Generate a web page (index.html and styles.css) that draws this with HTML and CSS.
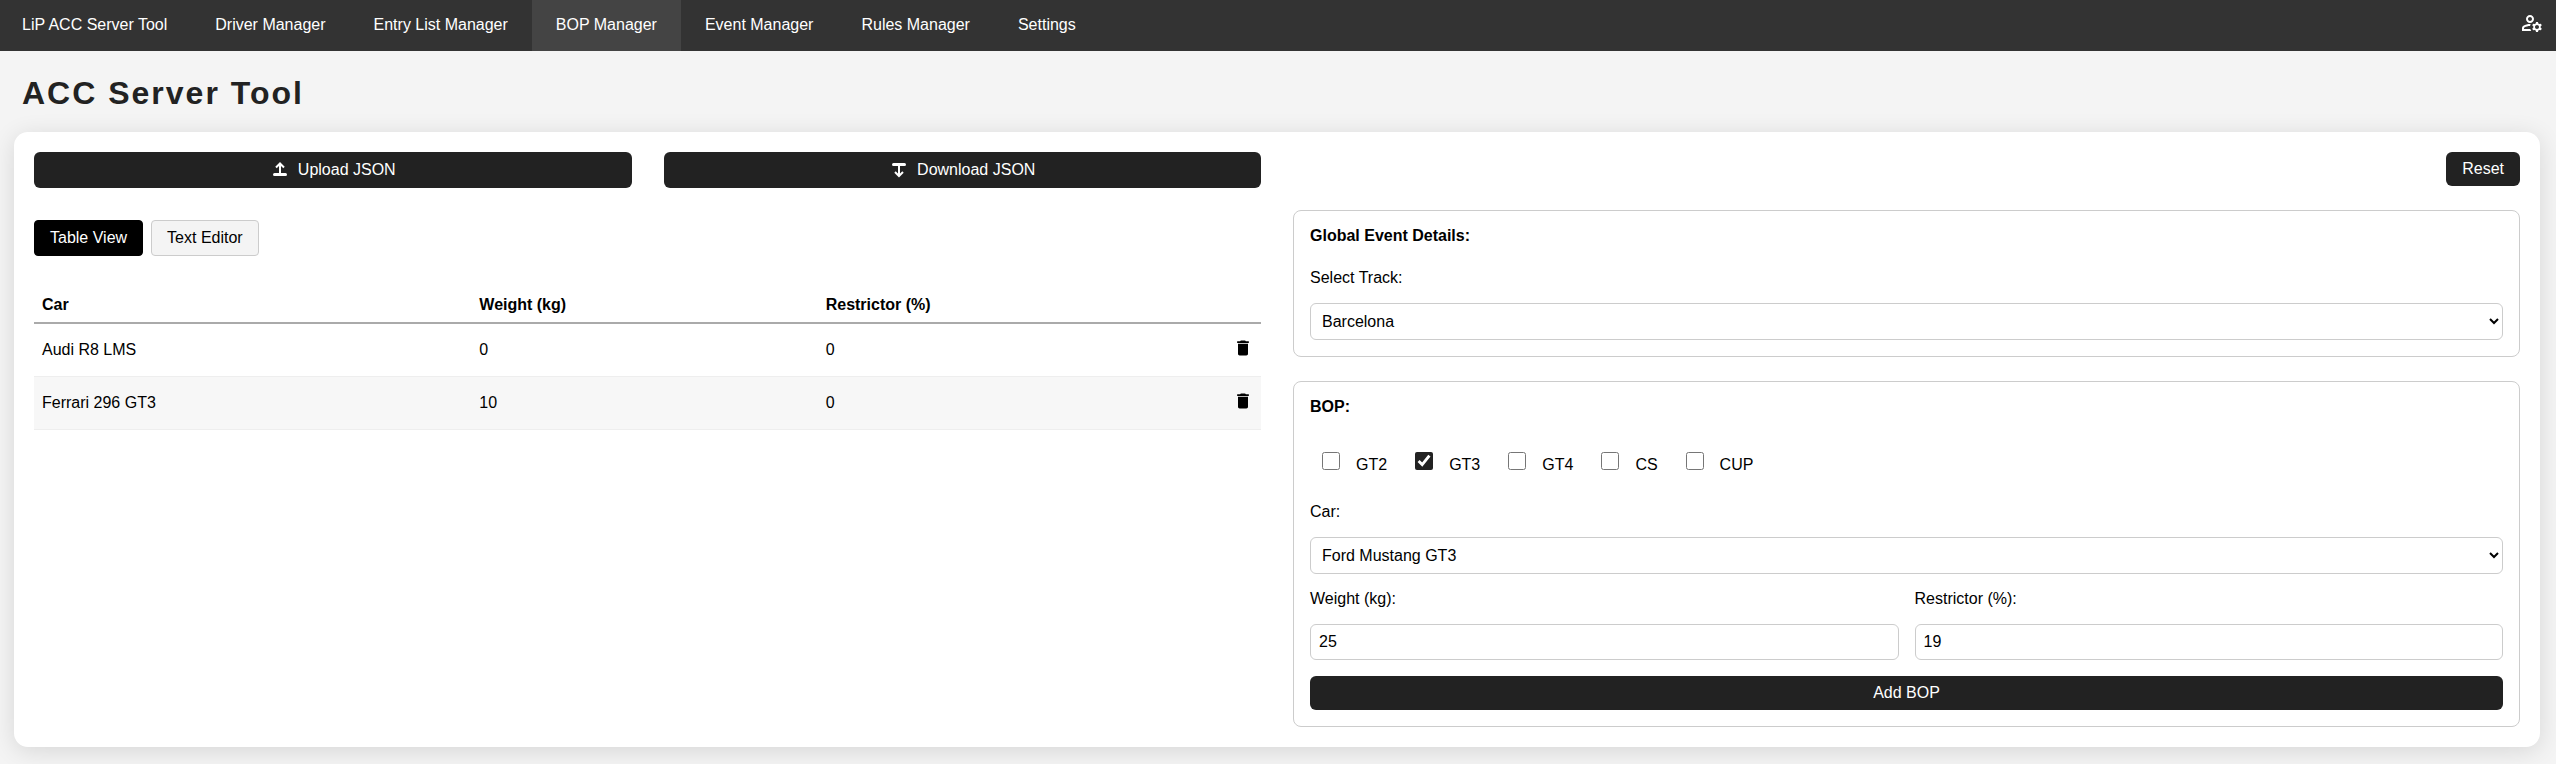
FILE: index.html
```html
<!DOCTYPE html>
<html lang="en">
<head>
    <meta charset="UTF-8">
    <meta name="viewport" content="width=device-width, initial-scale=1.0">
    <title>LiP ACC Server Tool</title>
    <link rel="stylesheet" href="styles.css">
</head>
<body>
    <nav class="navbar">
        <a class="brand" href="#">LiP ACC Server Tool</a>
        <a href="#drivers">Driver Manager</a>
        <a href="#entrylist">Entry List Manager</a>
        <a class="active" href="#bop">BOP Manager</a>
        <a href="#event">Event Manager</a>
        <a href="#rules">Rules Manager</a>
        <a href="#settings">Settings</a>
        <a class="account" href="#account" aria-label="Account">
            <svg width="24" height="24" viewBox="0 0 24 24" fill="currentColor"><path d="M4 18v-.65c0-.34.16-.66.41-.81C6.1 15.53 8.03 15 10 15c.03 0 .05 0 .08.01.1-.7.3-1.37.59-1.98-.22-.02-.44-.03-.67-.03-2.42 0-4.68.67-6.61 1.82-.88.52-1.39 1.5-1.39 2.53V20h9.26c-.42-.6-.75-1.28-.97-2H4zM10 12c2.21 0 4-1.79 4-4s-1.79-4-4-4-4 1.79-4 4 1.79 4 4 4zm0-6c1.1 0 2 .9 2 2s-.9 2-2 2-2-.9-2-2 .9-2 2-2zM20.75 16c0-.22-.03-.42-.06-.63l1.14-1.01-1-1.73-1.45.49c-.32-.27-.68-.48-1.08-.63L18 11h-2l-.3 1.49c-.4.15-.76.36-1.08.63l-1.45-.49-1 1.73 1.14 1.01c-.03.21-.06.41-.06.63s.03.42.06.63l-1.14 1.01 1 1.73 1.45-.49c.32.27.68.48 1.08.63L16 21h2l.3-1.49c.4-.15.76-.36 1.08-.63l1.45.49 1-1.73-1.14-1.01c.03-.21.06-.41.06-.63zM17 18c-1.1 0-2-.9-2-2s.9-2 2-2 2 .9 2 2-.9 2-2 2z"/></svg>
        </a>
    </nav>

    <h1>ACC Server Tool</h1>

    <main class="container">
        <!-- Left: file actions and BOP table -->
        <section class="left">
            <div class="file-actions">
                <button class="btn" type="button">
                    <svg width="18" height="16" viewBox="-3 0 18 16" fill="none" stroke="currentColor"><path d="M7 11V2M3 5.500L7 1.500 11 5.500" stroke-width="2"/><path d="M1.500 12.500h11" stroke-width="3" stroke-linecap="round"/></svg>
                    Upload JSON
                </button>
                <button class="btn" type="button">
                    <svg width="18" height="16" viewBox="-3 0 18 16" fill="none" stroke="currentColor"><path d="M7 4v10M3 10L7 14 11 10" stroke-width="2"/><path d="M1.500 2.500h11" stroke-width="3" stroke-linecap="round"/></svg>
                    Download JSON
                </button>
            </div>

            <div class="tabs">
                <button class="tab selected" type="button">Table View</button>
                <button class="tab" type="button">Text Editor</button>
            </div>

            <table>
                <thead>
                    <tr>
                        <th>Car</th>
                        <th>Weight (kg)</th>
                        <th>Restrictor (%)</th>
                        <th class="remove"></th>
                    </tr>
                </thead>
                <tbody>
                    <tr>
                        <td>Audi R8 LMS</td>
                        <td>0</td>
                        <td>0</td>
                        <td class="remove"><button type="button" aria-label="Delete Audi R8 LMS"><svg width="20" height="20" viewBox="0 0 24 24" fill="currentColor"><path d="M6 19c0 1.100.9 2 2 2h8c1.100 0 2-.9 2-2V7H6v12zM19 4h-3.500l-1-1h-5l-1 1H5v2h14V4z"/></svg></button></td>
                    </tr>
                    <tr>
                        <td>Ferrari 296 GT3</td>
                        <td>10</td>
                        <td>0</td>
                        <td class="remove"><button type="button" aria-label="Delete Ferrari 296 GT3"><svg width="20" height="20" viewBox="0 0 24 24" fill="currentColor"><path d="M6 19c0 1.100.9 2 2 2h8c1.100 0 2-.9 2-2V7H6v12zM19 4h-3.500l-1-1h-5l-1 1H5v2h14V4z"/></svg></button></td>
                    </tr>
                </tbody>
            </table>
        </section>

        <!-- Right: event and BOP forms -->
        <section class="right">
            <button class="btn reset" type="button">Reset</button>

            <div class="panel">
                <h2>Global Event Details:</h2>
                <label for="track">Select Track:</label>
                <select id="track">
                    <option>Barcelona</option>
                </select>
            </div>

            <form class="panel">
                <h2>BOP:</h2>
                <div class="classes">
                    <label><input type="checkbox">GT2</label>
                    <label><input type="checkbox" checked>GT3</label>
                    <label><input type="checkbox">GT4</label>
                    <label><input type="checkbox">CS</label>
                    <label><input type="checkbox">CUP</label>
                </div>
                <label for="car">Car:</label>
                <select id="car">
                    <option>Ford Mustang GT3</option>
                </select>
                <div class="values">
                    <div class="field">
                        <label for="weight">Weight (kg):</label>
                        <input type="number" id="weight" value="25">
                    </div>
                    <div class="field">
                        <label for="restrictor">Restrictor (%):</label>
                        <input type="number" id="restrictor" value="19">
                    </div>
                </div>
                <button class="btn" type="button">Add BOP</button>
            </form>
        </section>
    </main>
</body>
</html>
```
FILE: styles.css
```css
* {
    box-sizing: border-box;
}

body {
    margin: 0;
    background-color: #f4f4f4;
    color: #000;
    font-family: "Liberation Sans", Arial, sans-serif;
    font-size: 16px;
    line-height: 18px;
}

button, input, select {
    font: inherit;
    color: inherit;
}

.navbar {
    display: flex;
    background-color: #333;
}

.navbar a {
    padding: 16px 24px 17px;
    color: #fff;
    text-decoration: none;
}

.navbar .brand {
    padding-left: 22px;
}

.navbar a.active {
    background-color: #444;
}

.navbar .account {
    margin-left: auto;
    padding: 11px 12px 0;
}

svg {
    display: block;
}

h1 {
    margin: 24px 22px 20px;
    font-size: 32px;
    line-height: 37px;
    letter-spacing: 2px;
    color: #222;
}

.container {
    display: grid;
    grid-template-columns: 1fr 1fr;
    gap: 32px;
    margin: 0 16px 18px 14px;
    padding: 20px;
    background-color: #fff;
    border-radius: 14px;
    box-shadow: 0 4px 24px rgba(0, 0, 0, 0.12);
}

.btn {
    padding: 8px 16px;
    background-color: #222;
    color: #fff;
    border: none;
    border-radius: 6px;
    cursor: pointer;
}

/* Left column */
.file-actions {
    display: grid;
    grid-template-columns: 1fr 1fr;
    gap: 32px;
}

.file-actions .btn {
    display: flex;
    justify-content: center;
    align-items: center;
    gap: 10px;
    height: 36px;
}

.tabs {
    display: flex;
    gap: 8px;
    margin: 32px 0;
}

.tab {
    padding: 8px 15px;
    height: 36px;
    background-color: #f4f4f4;
    border: 1px solid #ccc;
    border-radius: 4px;
    cursor: pointer;
}

.tab.selected {
    background-color: #000;
    border-color: #000;
    color: #fff;
}

table {
    width: 100%;
    border-collapse: collapse;
}

th, td {
    padding: 8px;
    text-align: left;
}

th {
    border-bottom: 2px solid #aaa;
}

td {
    height: 53px;
    border-bottom: 1px solid #eee;
}

tbody tr:nth-child(even) {
    background-color: #f7f7f7;
}

.remove {
    width: 36px;
}

.remove button {
    padding: 0;
    background: none;
    border: none;
    cursor: pointer;
}

/* Right column */
.right {
    display: flex;
    flex-direction: column;
    gap: 24px;
}

.reset {
    align-self: flex-end;
}

.panel {
    display: flex;
    flex-direction: column;
    gap: 16px;
    padding: 16px;
    border: 1px solid #ccc;
    border-radius: 8px;
}

.panel h2 {
    margin: 0 0 8px;
    font-size: 16px;
}

select, input[type="number"] {
    width: 100%;
    height: 36px;
    padding: 8px;
    background-color: #fff;
    border: 1px solid #ccc;
    border-radius: 6px;
}

select {
    height: 37px;
    padding: 8px 7px;
}

.classes {
    display: flex;
    gap: 16px;
    padding: 12px 0 13px;
}

.classes label {
    display: flex;
    align-items: baseline;
    gap: 16px;
    margin-left: 12px;
}

.classes input {
    width: 18px;
    height: 18px;
    margin: 0;
    accent-color: #222;
}

.values {
    display: grid;
    grid-template-columns: 1fr 1fr;
    gap: 16px;
}

.field {
    display: flex;
    flex-direction: column;
    gap: 16px;
}
```
